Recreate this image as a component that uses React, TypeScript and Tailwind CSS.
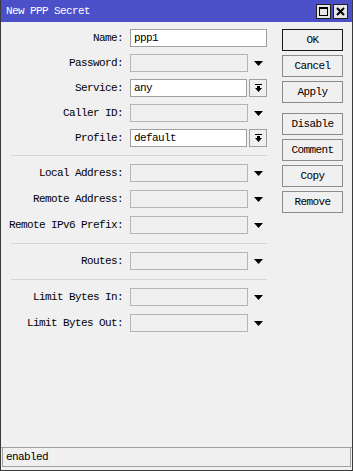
const FONT = { fontFamily: '"Liberation Mono", "DejaVu Sans Mono", monospace' }

type Row = { label: string; value?: string; kind: 'text' | 'arrow' | 'select' }

// each group: rows and the gap between them
const GROUPS: { rows: Row[]; gap: string; sepTop: string }[] = [
  {
    gap: 'gap-[7px]',
    sepTop: '',
    rows: [
      { label: 'Name:', value: 'ppp1', kind: 'text' },
      { label: 'Password:', kind: 'arrow' },
      { label: 'Service:', value: 'any', kind: 'select' },
      { label: 'Caller ID:', kind: 'arrow' },
      { label: 'Profile:', value: 'default', kind: 'select' },
    ],
  },
  {
    gap: 'gap-[8px]',
    sepTop: 'mt-[8px]',
    rows: [
      { label: 'Local Address:', kind: 'arrow' },
      { label: 'Remote Address:', kind: 'arrow' },
      { label: 'Remote IPv6 Prefix:', kind: 'arrow' },
    ],
  },
  { gap: 'gap-[8px]', sepTop: 'mt-[9px]', rows: [{ label: 'Routes:', kind: 'arrow' }] },
  {
    gap: 'gap-[8px]',
    sepTop: 'mt-[9px]',
    rows: [
      { label: 'Limit Bytes In:', kind: 'arrow' },
      { label: 'Limit Bytes Out:', kind: 'arrow' },
    ],
  },
]

function DownArrow() {
  return (
    <svg width="9" height="5" viewBox="0 0 9 5">
      <path d="M0 0H9L4.5 5Z" fill="#000" />
    </svg>
  )
}

function SelectIcon() {
  return (
    <svg width="7" height="8" viewBox="0 0 7 8">
      <rect x="0" y="0" width="7" height="1" fill="#000" />
      <path d="M2 2H5V4H7L3.5 8L0 4H2Z" fill="#000" />
    </svg>
  )
}

function FieldRow({ row }: { row: Row }) {
  return (
    <div className="flex h-[18px] items-center">
      <div className="w-[123px] shrink-0 text-right pr-[1px] leading-none">{row.label}</div>
      <div className="ml-[6px] flex items-center">
        {row.kind === 'text' && (
          <div className="h-[18px] w-[137px] border border-[#a0a0a0] bg-white px-[3px] flex items-center">
            {row.value}
          </div>
        )}
        {row.kind === 'arrow' && (
          <>
            <div className="h-[18px] w-[118px] border border-[#b4b4b4] bg-[#f0f0f0]" />
            <div className="w-[19px] flex justify-center pl-[1px]">
              <DownArrow />
            </div>
          </>
        )}
        {row.kind === 'select' && (
          <>
            <div className="h-[18px] w-[117px] border border-[#a0a0a0] bg-white px-[3px] flex items-center">
              {row.value}
            </div>
            <div className="ml-[2px] h-[18px] w-[18px] border border-[#a0a0a0] bg-[#f0f0f0] flex items-center justify-center">
              <SelectIcon />
            </div>
          </>
        )}
      </div>
    </div>
  )
}

function Btn({ label, primary }: { label: string; primary?: boolean }) {
  return (
    <div
      className={`h-[22px] w-[61px] flex items-center justify-center border bg-[#f0f0f0] ${
        primary ? 'border-[#1a1a1a]' : 'border-[#8c8c8c]'
      }`}
    >
      {label}
    </div>
  )
}

export default function App() {
  return (
    <div
      className="w-[353px] h-[471px] flex flex-col bg-[#f0f0f0] border border-t-0 border-[#3a3a3a] text-[11px] tracking-[-0.6px] text-black"
      style={FONT}
    >
      <div className="h-[22px] shrink-0 bg-[#4b50c8] flex items-center pl-[5px] pr-[4px]">
        <span className="text-white">New PPP Secret</span>
        <div className="ml-auto flex gap-[2px]">
          <div className="h-[15px] w-[15px] bg-[#e6e6e6] border border-[#202020] flex items-center justify-center">
            <div className="h-[9px] w-[9px] border border-black border-t-2" />
          </div>
          <div className="h-[15px] w-[15px] bg-[#e6e6e6] border border-[#202020] flex items-center justify-center">
            <svg width="9" height="9" viewBox="0 0 9 9">
              <path d="M1 1L8 8M8 1L1 8" stroke="#000" strokeWidth="2" />
            </svg>
          </div>
        </div>
      </div>

      <div className="flex-1 flex pt-[7px]">
        <div className="w-[274px] shrink-0 flex flex-col">
          {GROUPS.map((group, gi) => (
            <div key={gi} className="flex flex-col">
              {gi > 0 && <div className={`ml-[10px] w-[256px] h-px bg-[#d6d6d6] mb-[8px] ${group.sepTop}`} />}
              <div className={`flex flex-col ${group.gap}`}>
                {group.rows.map((row) => (
                  <FieldRow key={row.label} row={row} />
                ))}
              </div>
            </div>
          ))}
        </div>
        <div className="ml-[7px] flex flex-col">
          <div className="flex flex-col gap-[4px]">
            <Btn label="OK" primary />
            <Btn label="Cancel" />
            <Btn label="Apply" />
          </div>
          <div className="mt-[10px] flex flex-col gap-[4px]">
            <Btn label="Disable" />
            <Btn label="Comment" />
            <Btn label="Copy" />
            <Btn label="Remove" />
          </div>
        </div>
      </div>

      <div className="shrink-0 border-t border-[#a0a0a0] px-[1px] pb-[2px] mb-[1px]">
        <div className="h-[19px] border border-t-0 border-[#a0a0a0] flex items-center px-[3px]">enabled</div>
      </div>
    </div>
  )
}
